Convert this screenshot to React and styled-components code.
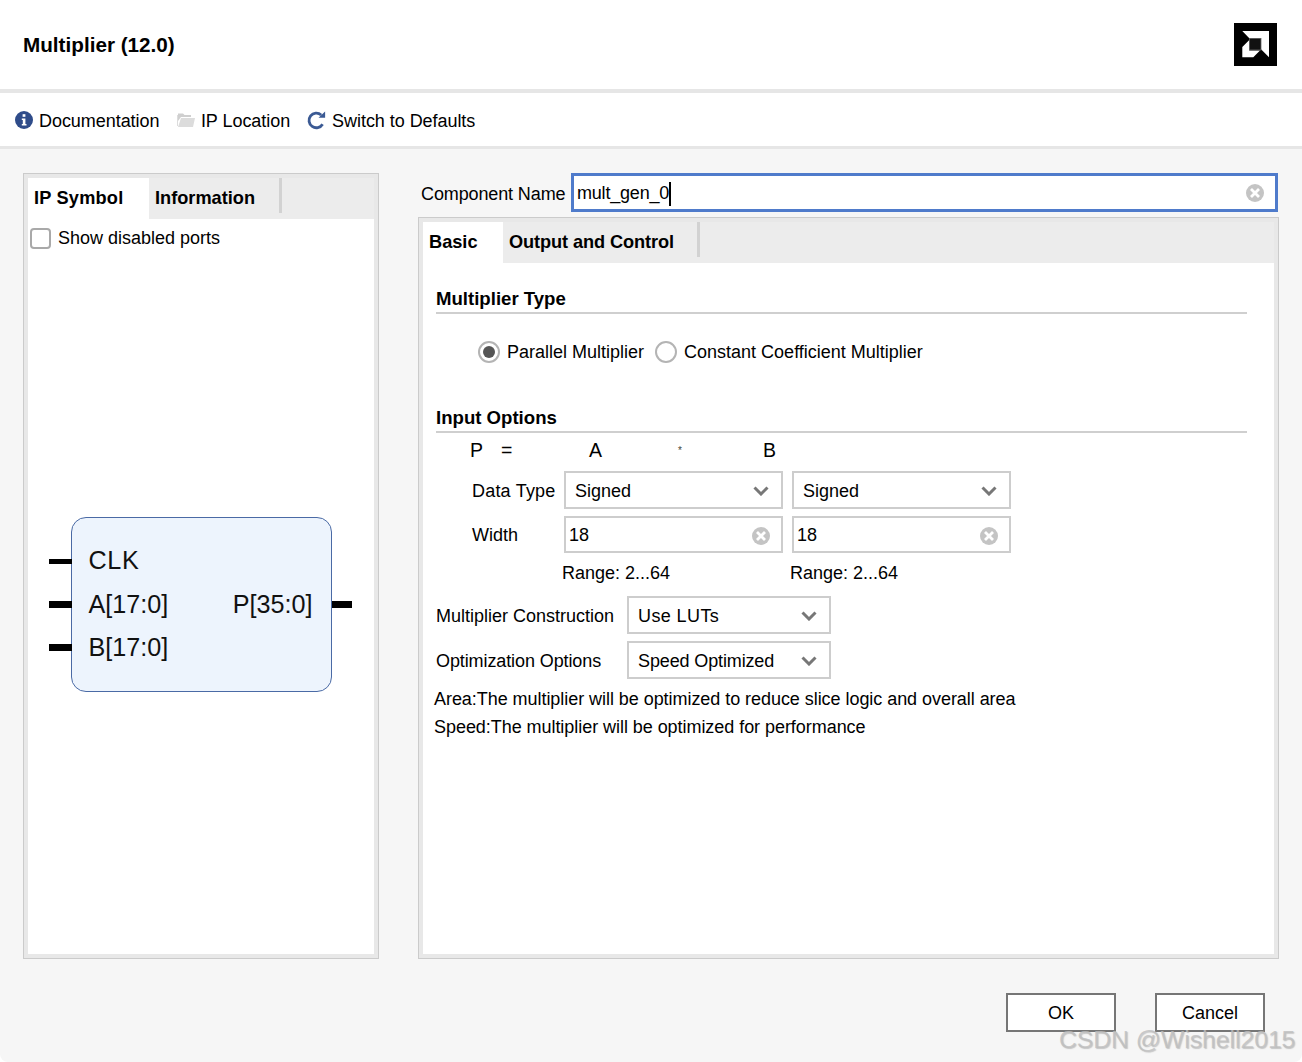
import React from 'react';
import styled, { createGlobalStyle } from 'styled-components';

const Global = createGlobalStyle`
  html, body { margin: 0; padding: 0; background: #fff; }
  body { font-family: "Liberation Sans", Arial, sans-serif; font-size: 18px; color: #000; }
  * { box-sizing: border-box; }
`;
const Page = styled.div`
  position: relative; width: 1302px; height: 1062px; overflow: hidden;
  display: flex; flex-direction: column; background: #f6f6f6;
  border-bottom-right-radius: 8px; border-bottom-left-radius: 8px;
`;
const Header = styled.header`
  height: 93px; flex: none; background: #fff; border-bottom: 4px solid #e6e6e6;
  display: flex; align-items: center; justify-content: space-between;
  padding: 0 25px 0 23px;
`;
const Title = styled.h1`
  margin: 0; font-size: 20.7px; font-weight: 700; line-height: 24px;
`;
const Logo = styled.svg` width: 43px; height: 43px; display: block; `;
const Toolbar = styled.nav`
  height: 56px; flex: none; background: #fff; border-bottom: 3px solid #e6e6e6;
  display: flex; align-items: center; padding: 1px 0 0 15px;
`;
const ToolItem = styled.span`
  display: inline-flex; align-items: center; gap: 6px; margin-right: ${p => p.$gap}px;
  white-space: nowrap; line-height: 24px;
`;
const ToolText = styled.span` padding-top: 2px; letter-spacing: -0.05px; `;
const Body = styled.main`
  flex: 1; display: flex; padding: 24px 23px 0 23px; gap: 39px; align-items: flex-start;
`;
const Frame = styled.section`
  display: flex; flex-direction: column; height: ${p => p.$h}px; width: ${p => p.$w}px;
  border: 1px solid #cbcbcb; padding: 4px; background: #e8e8e8;
`;
const TabStrip = styled.div`
  height: 41px; flex: none; background: #ececec; display: flex;
`;
const Tab = styled.div`
  width: ${p => p.$w}px; padding: 0 6px 1px; display: flex; align-items: center;
  font-weight: 700; font-size: 18.2px; white-space: nowrap; letter-spacing: ${p => p.$ls || 0}px;
  background: ${p => p.$active ? '#fff' : 'transparent'};
`;
const TabEnd = styled.div` width: 3px; height: 35px; background: #d2d2d2; `;
const Pane = styled.div`
  flex: 1; min-height: 0; background: #fff; display: flex; flex-direction: column;
`;
const CheckRow = styled.label`
  display: flex; align-items: center; gap: 7px; height: 22px; margin: 8px 0 0 2px; line-height: 22px;
`;
const CheckBox = styled.span`
  width: 21px; height: 21px; border: 2px solid #a9a9a9; border-radius: 4px; background: #fff; flex: none;
`;
const SymbolArea = styled.div`
  flex: 1; display: flex; align-items: center; justify-content: center; padding-top: 6px;
`;
const Block = styled.div`
  position: relative; width: 261px; height: 175px; background: #edf4fd;
  border: 1px solid #4a6aa5; border-radius: 15px;
  display: grid; grid-template-columns: 1fr auto; align-content: start;
  padding: 21px 18px 0 17px; font-size: 25.2px; line-height: 43.5px; color: #111;
`;
const ClkLabel = styled.span` letter-spacing: 0.6px; `;
const Pin = styled.i`
  position: absolute; background: #000; height: ${p => p.$h}px; top: ${p => p.$top}px;
  ${p => p.$right ? 'left: 260px; width: 20px;' : 'left: -23px; width: 23px;'}
`;
const RightCol = styled.div` display: flex; flex-direction: column; `;
const NameRow = styled.div` display: flex; align-items: center; height: 39px; margin-left: -1px; `;
const NameLabel = styled.label`
  width: 150px; flex: none; white-space: nowrap; margin-left: 4px; padding-top: 3px; letter-spacing: -0.12px;
`;
const NameInput = styled.div`
  width: 707px; height: 39px; border: 3px solid #4f7bcb; background: #fff;
  display: flex; align-items: center; justify-content: space-between; padding: 0 11px 0 3px;
`;
const NameValue = styled.span` padding-top: 2px; letter-spacing: -0.2px; `;
const Caret = styled.span` display: inline-block; width: 1.5px; height: 24px; background: #000; vertical-align: middle; `;
const RightFrame = styled(Frame)` margin: 5px 0 0 0; `;
const Section = styled.div` padding: 0 27px 0 13px; `;
const Heading = styled.h2`
  margin: ${p => p.$mt}px 0 0; font-size: 18.6px; font-weight: 700; line-height: 24px; height: 27px;
  border-bottom: 2px solid #cfcfcf;
`;
const RadioRow = styled.div`
  display: flex; align-items: center; height: 24px; margin: 26px 0 0 42px; line-height: 24px;
`;
const Radio = styled.span`
  width: 22px; height: 22px; border-radius: 50%; border: 2px solid #b4b4b4; background: #fff;
  display: inline-flex; align-items: center; justify-content: center; flex: none;
  margin: ${p => p.$m};
  &::after { content: ''; width: 12px; height: 12px; border-radius: 50%; background: ${p => p.$on ? '#555' : 'transparent'}; }
`;
const Equation = styled.div`
  display: grid; grid-template-columns: 31px 88px 89px 85px 1fr; margin: 5px 0 0 34px; height: 24px; line-height: 24px; font-size: 19.5px;
`;
const Star = styled.span` font-size: 10px; color: #443; line-height: 26px; `;
const ParamGrid = styled.div`
  display: grid; grid-template-columns: 92px 228px 219px; row-gap: 7px; margin: 9px 0 0 36px;
`;
const FieldLabel = styled.span`
  display: flex; align-items: center; white-space: nowrap; padding-top: 2px; letter-spacing: ${p => p.$ls || 0}px;
`;
const Field = styled.div`
  flex: none; width: ${p => p.$w || 219}px; height: ${p => p.$h || 38}px; border: 2px solid #cdcdcd; background: #fff;
  display: flex; align-items: center; justify-content: space-between;
  padding: 2px ${p => p.$pr}px 0 ${p => p.$pl}px;
`;
const FieldValue = styled.span` letter-spacing: ${p => p.$ls || 0}px; `;
const FieldPair = styled.div` display: flex; gap: 9px; grid-column: 2 / 4; `;
const RangeRow = styled.div`
  display: flex; height: 24px; margin: 8px 0 0 126px; line-height: 24px;
`;
const RangeText = styled.span` width: 228px; `;
const ConstructionRow = styled.div` display: flex; align-items: center; margin-top: ${p => p.$mt}px; `;
const ConstructionLabel = styled.span`
  width: 191px; white-space: nowrap; flex: none; padding-top: 2px; letter-spacing: ${p => p.$ls || 0}px;
`;
const NoteText = styled.p` margin: ${p => p.$mt}px 0 0 -2px; line-height: 24px; white-space: nowrap; letter-spacing: -0.05px; `;
const Footer = styled.footer`
  flex: none; display: flex; justify-content: flex-end; gap: 39px; padding: 0 37px 0 0; height: 69px; align-items: flex-start;
`;
const Button = styled.button`
  width: 110px; height: 39px; background: #fff; border: 2px solid #767676; font: inherit; color: #000; padding: 1px 0 0;
`;
const Watermark = styled.span`
  position: absolute; left: 1059px; top: 1024px; font-size: 24.7px; line-height: 32px; white-space: nowrap;
  color: rgba(190,190,190,.8); text-shadow: 1px 1px 1px rgba(150,150,150,.5);
`;

const Chevron = () => (
  <svg width="16" height="10" viewBox="0 0 16 10"><path d="M1.5 1.5 8 8l6.5-6.5" fill="none" stroke="#777" strokeWidth="3" /></svg>
);
const Clear = () => (
  <svg width="18" height="18" viewBox="0 0 18 18">
    <circle cx="9" cy="9" r="9" fill="#c4c4c4" />
    <path d="M5 5l8 8M13 5l-8 8" stroke="#fff" strokeWidth="2.8" />
  </svg>
);

const Select = ({ w, value, ls }) => (
  <Field $w={w} $pl={9} $pr={12}><FieldValue $ls={ls}>{value}</FieldValue><Chevron /></Field>
);

export default function App() {
  return (
    <Page>
      <Global />
      <Header>
        <Title>Multiplier (12.0)</Title>
        <Logo viewBox="0 0 43 43">
          <rect width="43" height="43" fill="#000" />
          <path d="M8.3 8H35v26.3l-8-8V15.3H15.3z" fill="#fff" />
          <path d="M15.3 17v10.5H26L19.3 34.3H8.3V24z" fill="#fff" />
          <rect x="15.5" y="15.5" width="11.5" height="11.5" fill="#111" stroke="#666" strokeWidth="0.8" />
        </Logo>
      </Header>
      <Toolbar>
        <ToolItem $gap={17.5}>
          <svg width="18" height="18" viewBox="0 0 18 18">
            <circle cx="9" cy="9" r="9" fill="#2f4c8a" />
            <rect x="7.6" y="3.2" width="2.8" height="2.6" fill="#fff" />
            <path d="M6.8 7.4h3.6v5.6h1.1v1.6H6.8V13h1v-4H6.8z" fill="#fff" />
          </svg>
          <ToolText>Documentation</ToolText>
        </ToolItem>
        <ToolItem $gap={17}>
          <svg width="18" height="16" viewBox="0 0 18 16">
            <path d="M1 3V1.5h5L7.5 3H14v2H4L1 9z" fill="#cfcfcf" />
            <path d="M0 3h1v11H0zM4 6h14l-2 9H1z" fill="#dcdcdc" />
          </svg>
          <ToolText>IP Location</ToolText>
        </ToolItem>
        <ToolItem $gap={0}>
          <svg width="19" height="19" viewBox="0 0 19 19">
            <path d="M15.6 13.2A7.3 7.3 0 1 1 14.2 4" fill="none" stroke="#3b5a94" strokeWidth="2.8" />
            <path d="M11.5 6.8h6.6V.4z" fill="#3b5a94" />
          </svg>
          <ToolText>Switch to Defaults</ToolText>
        </ToolItem>
      </Toolbar>
      <Body>
        <Frame $w={356} $h={786}>
          <TabStrip>
            <Tab $active $w={121} $ls={0.2}>IP Symbol</Tab>
            <Tab $w={130}>Information</Tab>
            <TabEnd />
          </TabStrip>
          <Pane>
            <CheckRow><CheckBox />Show disabled ports</CheckRow>
            <SymbolArea>
              <Block>
                <Pin $top={41} $h={5} />
                <Pin $top={83} $h={7} />
                <Pin $top={126} $h={7} />
                <Pin $right $top={83} $h={7} />
                <ClkLabel>CLK</ClkLabel><span />
                <span>A[17:0]</span><span>P[35:0]</span>
                <span>B[17:0]</span><span />
              </Block>
            </SymbolArea>
          </Pane>
        </Frame>
        <RightCol>
          <NameRow>
            <NameLabel>Component Name</NameLabel>
            <NameInput><NameValue>mult_gen_0<Caret /></NameValue><Clear /></NameInput>
          </NameRow>
          <RightFrame $w={861} $h={742}>
            <TabStrip>
              <Tab $active $w={80}>Basic</Tab>
              <Tab $w={194} $ls={-0.1}>Output and Control</Tab>
              <TabEnd />
            </TabStrip>
            <Pane>
              <Section>
                <Heading $mt={24}>Multiplier Type</Heading>
                <RadioRow>
                  <Radio $on $m="0 7px 0 0" />Parallel Multiplier
                  <Radio $m="0 7px 0 11px" />Constant Coefficient Multiplier
                </RadioRow>
                <Heading $mt={42}>Input Options</Heading>
                <Equation><span>P</span><span>=</span><span>A</span><Star>*</Star><span>B</span></Equation>
                <ParamGrid>
                  <FieldLabel $ls={0.2}>Data Type</FieldLabel>
                  <FieldPair><Select value="Signed" /><Select value="Signed" /></FieldPair>
                  <FieldLabel>Width</FieldLabel>
                  <FieldPair>
                    <Field $h={37} $pl={3} $pr={11}><FieldValue>18</FieldValue><Clear /></Field>
                    <Field $h={37} $pl={3} $pr={11}><FieldValue>18</FieldValue><Clear /></Field>
                  </FieldPair>
                </ParamGrid>
                <RangeRow><RangeText>Range: 2...64</RangeText><RangeText>Range: 2...64</RangeText></RangeRow>
                <ConstructionRow $mt={11}><ConstructionLabel>Multiplier Construction</ConstructionLabel><Select w={204} value="Use LUTs" ls={0.4} /></ConstructionRow>
                <ConstructionRow $mt={7}><ConstructionLabel $ls={-0.1}>Optimization Options</ConstructionLabel><Select w={204} value="Speed Optimized" ls={-0.13} /></ConstructionRow>
                <NoteText $mt={8}>Area:The multiplier will be optimized to reduce slice logic and overall area</NoteText>
                <NoteText $mt={4}>Speed:The multiplier will be optimized for performance</NoteText>
              </Section>
            </Pane>
          </RightFrame>
        </RightCol>
      </Body>
      <Footer>
        <Button>OK</Button>
        <Button>Cancel</Button>
      </Footer>
      <Watermark>CSDN @Wishell2015</Watermark>
    </Page>
  );
}
